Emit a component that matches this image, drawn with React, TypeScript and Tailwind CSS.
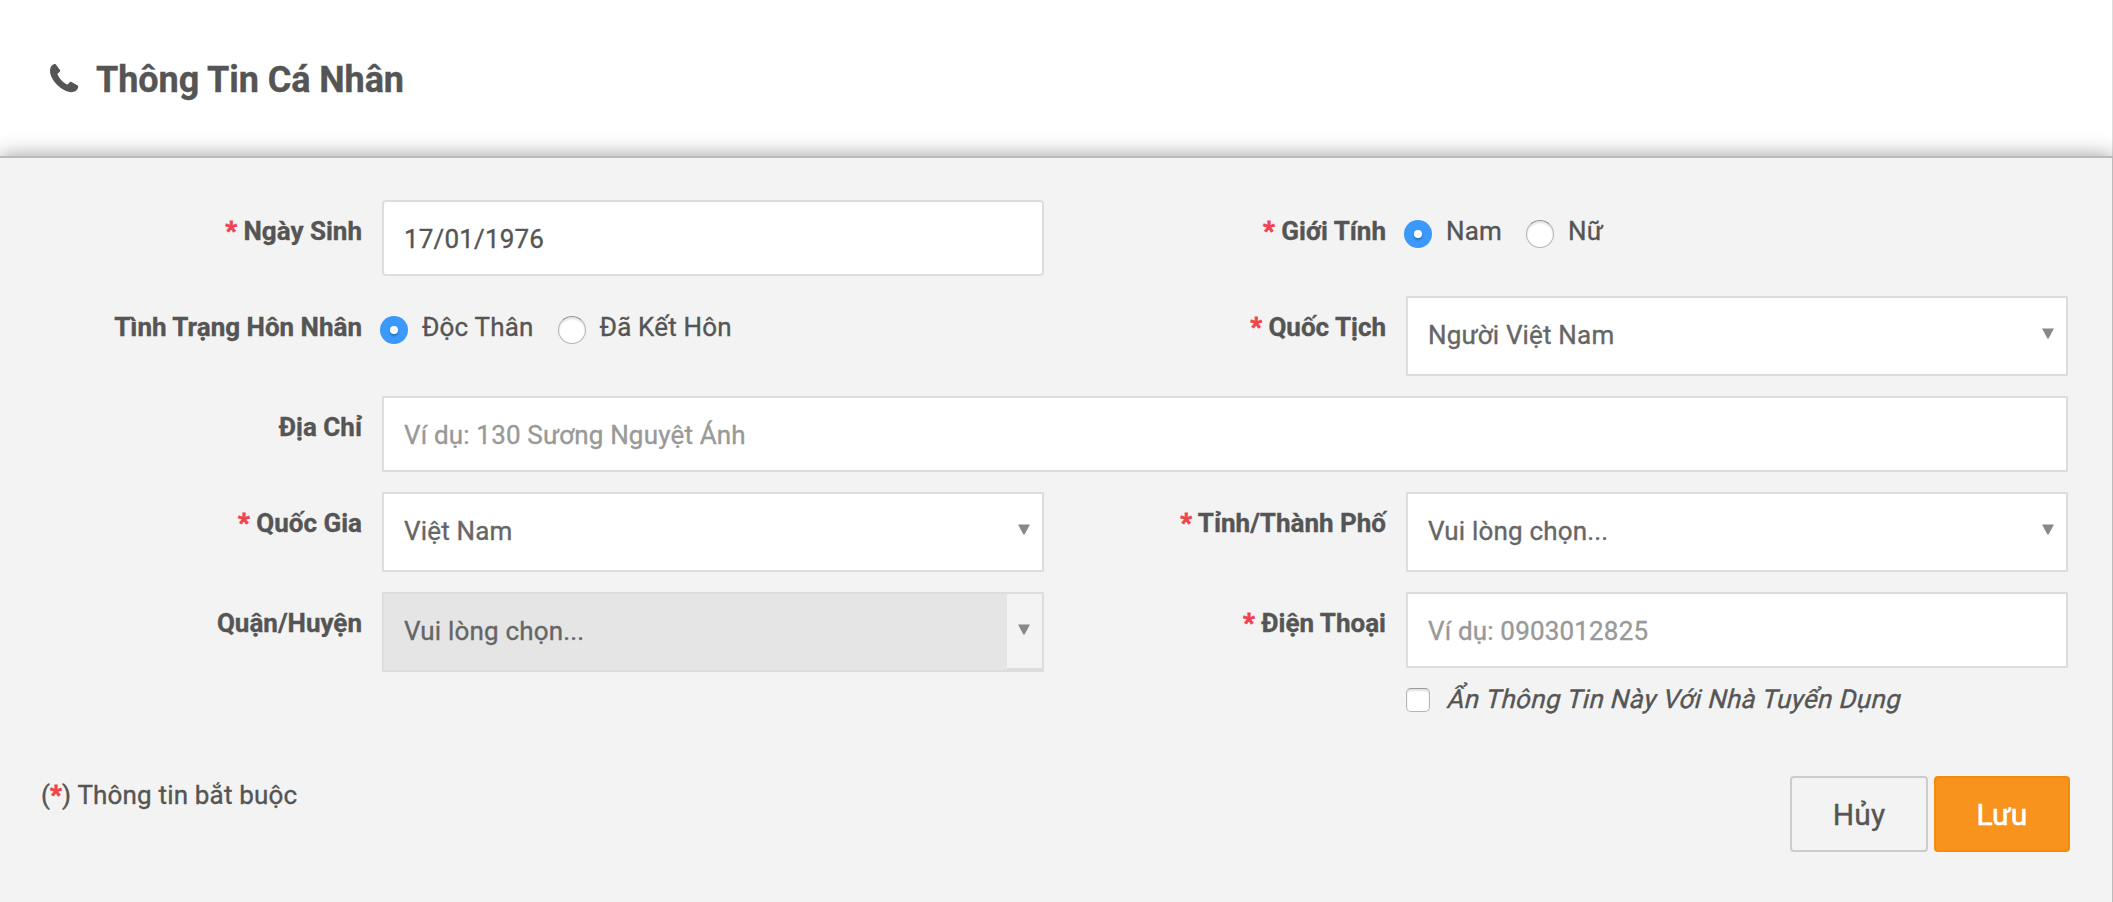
import type { ReactNode } from 'react';

function PhoneIcon() {
  return (
    <svg width="29" height="29" viewBox="0 0 29 29" className="mt-[10px] block" fill="#555">
      <path d="M4.2 0C5.4-.1 6 .2 6.5 1.2L10.1 6.2C10.5 7 10.2 7.4 9.5 8L7.8 9.4C7.4 9.9 7.5 10.4 7.8 11C9.6 15 12.6 18.2 16.6 20.2C17.2 20.5 17.7 20.5 18.1 20L19.7 18.3C20.2 17.8 20.8 17.7 21.5 18.1L27.3 21.3C28.2 21.8 28.4 22.5 28.1 23.5C27.4 26.3 24.8 28.2 21.5 28.2C17 28.2 11.3 25.2 7 20.8C2.8 16.5 0 11.3 0 6.8C0 3.6 1.5.8 4.2 0Z" />
    </svg>
  );
}

function Label({ required, children }: { required?: boolean; children: ReactNode }) {
  return (
    <div className="pt-[11px] pr-5 text-right leading-[40px] font-bold tracking-normal whitespace-nowrap">
      {required && <span className="text-[#f0434f] [-webkit-text-stroke:0.8px]">* </span>}
      {children}
    </div>
  );
}

function Input({ text, filled, rounded }: { text: string; filled?: boolean; rounded?: boolean }) {
  return (
    <div
      className={`h-[76px] border-2 border-[#ddd] bg-white pt-[17px] pl-5 leading-[40px] ${filled ? 'text-[#555]' : 'text-[#999]'} ${rounded ? 'rounded-[4px]' : ''}`}
    >
      {text}
    </div>
  );
}

function Select({ text, disabled }: { text: string; disabled?: boolean }) {
  return (
    <div
      className={`flex h-20 justify-between border-2 border-[#ddd] leading-[40px] text-[#666] ${disabled ? 'bg-[#e5e5e5]' : 'bg-white'}`}
    >
      <span className="pt-[17px] pl-5">{text}</span>
      <span
        className={`flex w-[35px] justify-center pt-[30px] pr-px ${disabled ? 'h-[76px] border-b-2 border-[#ddd] bg-[#f3f3f3]' : ''}`}
      >
        <svg width="12" height="11" viewBox="0 0 12 11" className="block">
          <path d="M0 0.5H12L6.6 10.5H5.4Z" fill="#888" />
        </svg>
      </span>
    </div>
  );
}

function Radio({ label, checked }: { label: string; checked?: boolean }) {
  return (
    <div className="flex">
      <span
        className={`mt-5 mr-[14px] flex size-7 items-center justify-center rounded-full ${checked ? 'bg-[#3b99fc]' : 'border border-[#b4b4b4] border-t-[#999] bg-white shadow-[inset_0_2px_2px_rgba(0,0,0,0.12)]'}`}
      >
        {checked && <span className="size-2 rounded-full bg-white shadow-[0_2px_2px_rgba(0,0,0,0.25)]" />}
      </span>
      <span className="pt-[11px] leading-[40px]">{label}</span>
    </div>
  );
}

export default function App() {
  return (
    <div className="h-[902px] w-full overflow-hidden bg-white font-[Roboto,sans-serif] text-[26px] tracking-[0.17px] text-[#555] [-webkit-text-stroke:0.35px]">
      <header className="flex h-[156px] items-start border-r border-[#ddd] pt-[54px] pl-[50px]">
        <PhoneIcon />
        <h1 className="pt-px pl-[17px] text-[36px] leading-[50px] font-bold tracking-[-0.08px]">Thông Tin Cá Nhân</h1>
      </header>
      <section className="h-[760px] border-t-2 border-r border-t-[#bbb] border-r-[#bbb] bg-[#f3f3f3] pt-[42px] shadow-[0_0_20px_rgba(0,0,0,0.4)]">
        <div className="grid grid-cols-[382px_662px_362px_662px] grid-rows-[76px_80px_76px_80px_120px] gap-y-5">
          <Label required>Ngày Sinh</Label>
          <Input text="17/01/1976" filled rounded />
          <Label required>Giới Tính</Label>
          <div className="-ml-0.5 flex gap-6">
            <Radio label="Nam" checked />
            <Radio label="Nữ" />
          </div>
          <Label>Tình Trạng Hôn Nhân</Label>
          <div className="-ml-0.5 flex gap-6">
            <Radio label="Độc Thân" checked />
            <Radio label="Đã Kết Hôn" />
          </div>
          <Label required>Quốc Tịch</Label>
          <Select text="Người Việt Nam" />
          <Label>Địa Chỉ</Label>
          <div className="col-span-3">
            <Input text="Ví dụ: 130 Sương Nguyệt Ánh" />
          </div>
          <Label required>Quốc Gia</Label>
          <Select text="Việt Nam" />
          <Label required>Tỉnh/Thành Phố</Label>
          <Select text="Vui lòng chọn..." />
          <Label>Quận/Huyện</Label>
          <Select text="Vui lòng chọn..." disabled />
          <Label required>Điện Thoại</Label>
          <div>
            <Input text="Ví dụ: 0903012825" />
            <div className="flex pt-[11px]">
              <span className="mt-[9px] mr-4 h-6 w-6 rounded-[5px] border border-[#b4b4b4] border-t-[#999] bg-white shadow-[inset_0_2px_2px_rgba(0,0,0,0.12)]" />
              <span className="inline-block origin-[0_29px] skew-x-[-14deg] leading-[40px] tracking-[0.3px]">
                Ẩn Thông Tin Này Với Nhà Tuyển Dụng
              </span>
            </div>
          </div>
        </div>
        <footer className="flex justify-between pt-[63px] pr-[42px] pl-[41px]">
          <div className="leading-[40px]">
            (<span className="font-bold text-[#f0434f] [-webkit-text-stroke:0.8px]">*</span>) Thông tin bắt buộc
          </div>
          <div className="mt-px flex gap-1.5 text-[30px] leading-[40px]">
            <button className="h-[76px] w-[138px] rounded-[4px] border-2 border-[#ccc] pt-[1px]">Hủy</button>
            <button className="h-[76px] w-[136px] rounded-[4px] border-2 border-[#f58a0b] bg-[#f8941d] pt-[1px] text-white [-webkit-text-stroke:0.6px]">
              Lưu
            </button>
          </div>
        </footer>
      </section>
    </div>
  );
}
